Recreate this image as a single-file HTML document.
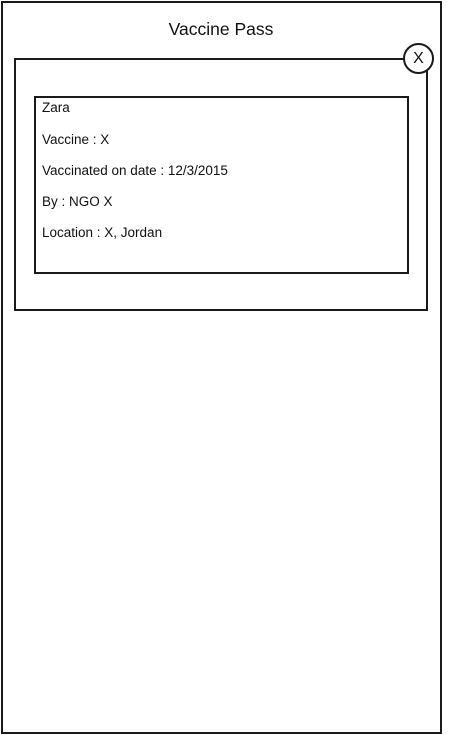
<!DOCTYPE html>
<html><head><style>
body{margin:0;width:456px;height:735px;background:#fff;position:relative;overflow:hidden;font-family:"Liberation Sans",sans-serif;color:#111}
.b{position:absolute;border:2px solid #1a1a1a;box-sizing:border-box;background:#fff}
.t{position:absolute;font-size:13.5px;left:42px;white-space:nowrap}
</style></head><body>
<div class="b" style="left:1px;top:1px;width:441px;height:733px"></div>
<div style="position:absolute;left:0;width:442px;top:19px;text-align:center;font-size:17.5px">Vaccine Pass</div>
<div class="b" style="left:14px;top:58px;width:414px;height:253px"></div>
<div class="b" style="left:34px;top:96px;width:375px;height:178px"></div>
<div class="t" style="top:100px">Zara</div>
<div class="t" style="top:132px">Vaccine : X</div>
<div class="t" style="top:163px">Vaccinated on date : 12/3/2015</div>
<div class="t" style="top:194px">By : NGO X</div>
<div class="t" style="top:225px">Location : X, Jordan</div>
<div class="b" style="left:403px;top:43px;width:31px;height:31px;border-radius:50%;text-align:center;line-height:27px;font-size:16px">X</div>
</body></html>
